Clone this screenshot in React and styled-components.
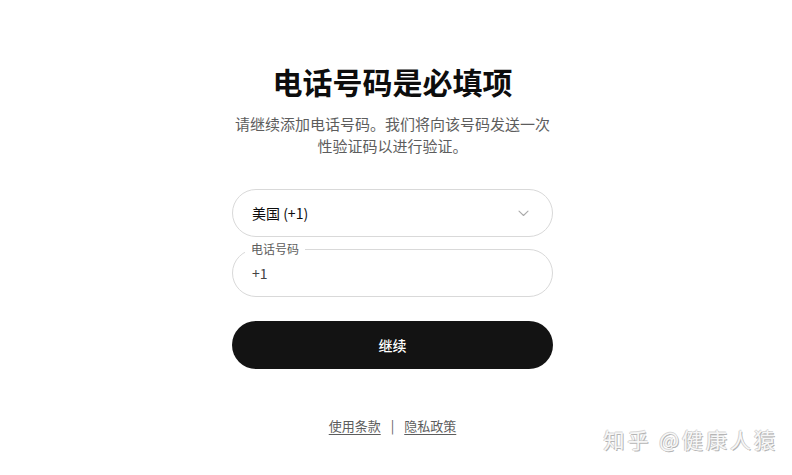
import React from 'react';
import styled, { createGlobalStyle } from 'styled-components';

const GlobalStyle = createGlobalStyle`
  html, body {
    margin: 0;
    padding: 0;
    background: #ffffff;
  }
  body {
    font-family: "Noto Sans CJK SC", "Noto Sans", "Liberation Sans", sans-serif;
    color: #0d0d0d;
  }
`;

const Page = styled.div`
  position: relative;
  width: 792px;
  height: 475px;
  overflow: hidden;
  display: flex;
  justify-content: center;
`;

const Panel = styled.div`
  width: 321px;
  margin-right: 7px;
  padding-top: 61px;
  display: flex;
  flex-direction: column;
  align-items: stretch;
`;

const Title = styled.h1`
  margin: 0;
  text-align: center;
  font-size: 30px;
  line-height: 40px;
  font-weight: 700;
  color: #0d0d0d;
  white-space: nowrap;
`;

const Subtitle = styled.p`
  margin: 12px 0 0;
  text-align: center;
  font-size: 15px;
  line-height: 22px;
  color: #5d5d5d;
`;

const Field = styled.div`
  position: relative;
  height: 48px;
  box-sizing: border-box;
  border: 1px solid #d9d9d9;
  border-radius: 24px;
  display: flex;
  align-items: center;
  justify-content: space-between;
  padding: 0 23px 0 19px;
  margin-top: ${p => p.$gap}px;
  font-size: 14px;
  color: ${p => (p.$muted ? '#444' : '#0d0d0d')};
`;

const FloatLabel = styled.span`
  position: absolute;
  left: 12px;
  top: -9px;
  padding: 0 6px;
  background: #fff;
  font-size: 12px;
  line-height: 16px;
  color: #5d5d5d;
`;

const Chevron = () => (
  <svg width="11" height="7" viewBox="0 0 11 7" fill="none">
    <path d="M1 1.2 L5.5 5.5 L10 1.2" stroke="#ababab" strokeWidth="1.1" strokeLinecap="round" strokeLinejoin="round" />
  </svg>
);

const Button = styled.button`
  margin-top: 24px;
  height: 48px;
  border: none;
  border-radius: 24px;
  background: #131313;
  color: #ffffff;
  font-family: inherit;
  font-size: 14px;
  font-weight: 500;
  cursor: pointer;
`;

const Footer = styled.div`
  margin-top: 47px;
  display: flex;
  justify-content: center;
  align-items: center;
  gap: 10px;
  font-size: 13px;
  color: #5d5d5d;
`;

const FooterLink = styled.a`
  color: #5d5d5d;
  text-decoration: underline;
  text-underline-offset: 3px;
`;

const Watermark = styled.div`
  position: absolute;
  right: 14px;
  bottom: 21px;
  font-size: 21px;
  letter-spacing: 3px;
  color: #f7f7f7;
  text-shadow: 1px 1px 0 #b5b5b5, -1px 0 0 #d0d0d0, 0 -1px 0 #d8d8d8;
`;

export default function App() {
  return (
    <Page>
      <GlobalStyle />
      <Panel>
        <Title>电话号码是必填项</Title>
        <Subtitle>请继续添加电话号码。我们将向该号码发送一次性验证码以进行验证。</Subtitle>
        <Field $gap={32}>
          <span>美国 (+1)</span>
          <Chevron />
        </Field>
        <Field $gap={12} $muted>
          <FloatLabel>电话号码</FloatLabel>
          <span>+1</span>
        </Field>
        <Button>继续</Button>
        <Footer>
          <FooterLink>使用条款</FooterLink>
          <span>|</span>
          <FooterLink>隐私政策</FooterLink>
        </Footer>
      </Panel>
      <Watermark>知乎 @健康人猿</Watermark>
    </Page>
  );
}
